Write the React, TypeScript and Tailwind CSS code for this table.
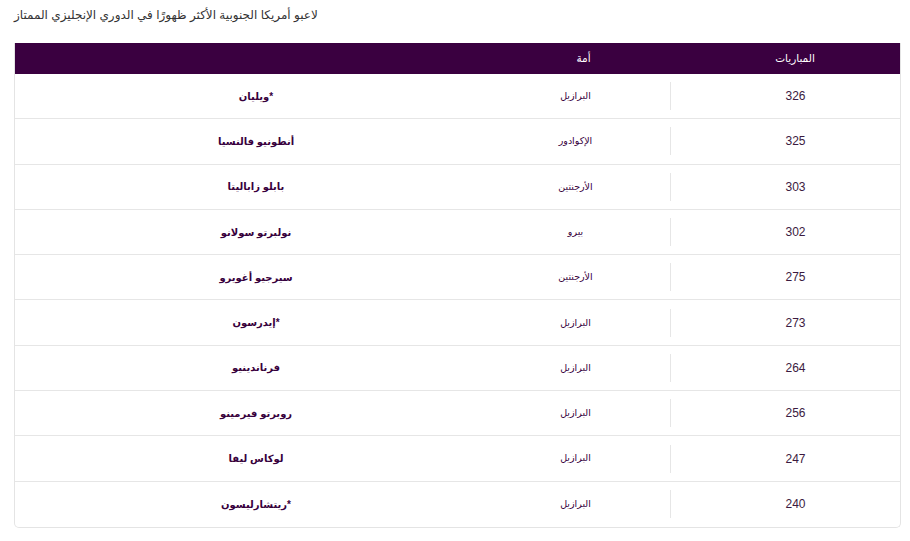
import React from 'react';

type Player = { name: string; nation: string; apps: number };

const players: Player[] = [
  { name: '*ويليان', nation: 'البرازيل', apps: 326 },
  { name: 'أنطونيو فالنسيا', nation: 'الإكوادور', apps: 325 },
  { name: 'بابلو زاباليتا', nation: 'الأرجنتين', apps: 303 },
  { name: 'نولبرتو سولانو', nation: 'بيرو', apps: 302 },
  { name: 'سيرجيو أغويرو', nation: 'الأرجنتين', apps: 275 },
  { name: '*إيدرسون', nation: 'البرازيل', apps: 273 },
  { name: 'فرناندينيو', nation: 'البرازيل', apps: 264 },
  { name: 'روبرتو فيرمينو', nation: 'البرازيل', apps: 256 },
  { name: 'لوكاس ليفا', nation: 'البرازيل', apps: 247 },
  { name: '*ريتشارليسون', nation: 'البرازيل', apps: 240 },
];

export default function App() {
  return (
    <div
      className="min-h-[541px] w-[910px] bg-white pl-[14px] pt-[7px]"
      style={{ fontFamily: '"Liberation Sans", "DejaVu Sans", sans-serif' }}
    >
      <div className="flex">
        <h1 className="whitespace-nowrap text-[12px] leading-[16px] font-normal text-[#333333]" dir="rtl">
          لاعبو أمريكا الجنوبية الأكثر ظهورًا في الدوري الإنجليزي الممتاز
        </h1>
      </div>

      <div className="mt-[20px] w-[887px] overflow-hidden rounded-b-[5px] border-x border-b border-[#e4e4e4]">
        <div className="grid h-[31px] grid-cols-[482px_173px_230px] items-center bg-[#3a0040] text-[10.5px] text-white">
          <div />
          <div className="text-center" dir="rtl">أمة</div>
          <div className="pl-[20px] text-center" dir="rtl">المباريات</div>
        </div>

        {players.map((p, i) => (
          <div
            key={p.apps + p.name}
            className={`grid h-[45.3px] grid-cols-[482px_173px_230px] items-center text-[#37003c] ${
              i < players.length - 1 ? 'border-b border-[#e6e6e6]' : ''
            }`}
          >
            <div className="text-center text-[10px] font-bold" dir="rtl">{p.name}</div>
            <div className="pr-[16px] text-center text-[9.5px]" dir="rtl">{p.nation}</div>
            <div className="flex h-[28px] items-center justify-center border-l border-[#e6e6e6] pl-[20px] text-[12px] text-[#3b1a40]">
              {p.apps}
            </div>
          </div>
        ))}
      </div>
    </div>
  );
}
